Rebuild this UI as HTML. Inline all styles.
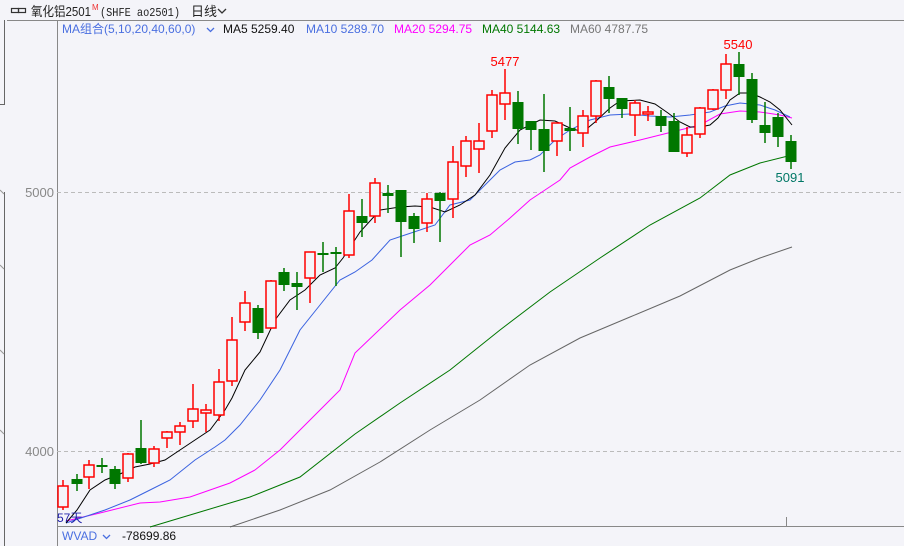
<!DOCTYPE html>
<html><head><meta charset="utf-8"><style>
body{margin:0;width:904px;height:546px;overflow:hidden;background:#f4f4f9;font-family:"Liberation Sans","Noto Sans CJK SC",sans-serif}
svg{position:absolute;left:0;top:0}
</style></head><body>
<svg width="904" height="546" viewBox="0 0 904 546" xmlns="http://www.w3.org/2000/svg" font-family="Liberation Sans, Noto Sans CJK SC, sans-serif">
<rect width="904" height="546" fill="#f4f4f9"/>
<g stroke="#333" fill="none" stroke-width="1.2"><rect x="11.5" y="8.5" width="7" height="4"/><rect x="18.5" y="8.5" width="7" height="4"/></g>
<text x="31" y="16" font-size="13" fill="#222" textLength="60" lengthAdjust="spacingAndGlyphs">氧化铝2501</text>
<text x="92" y="10" font-size="8" fill="#e33">M</text>
<text x="100" y="16" font-size="12" fill="#222" font-family="Liberation Mono, monospace" textLength="80" lengthAdjust="spacingAndGlyphs">(SHFE ao2501)</text>
<text x="191" y="16" font-size="13" fill="#222" textLength="26" lengthAdjust="spacingAndGlyphs">日线</text>
<path d="M218 9l4 4 4-4" stroke="#333" fill="none" stroke-width="1.3"/>
<line x1="7" y1="20.5" x2="904" y2="20.5" stroke="#888"/>
<path d="M0 104.5H4.5V20M4.5 546V192" stroke="#666" fill="none"/>
<path d="M0 190l4 4M0 265l4 4M0 350l4 4M0 430l4 4" stroke="#999"/>
<line x1="57.5" y1="20" x2="57.5" y2="546" stroke="#888"/>
<line x1="57" y1="526.5" x2="904" y2="526.5" stroke="#888"/>
<g stroke="#bbb" stroke-dasharray="4,3"><line x1="57" y1="192.5" x2="904" y2="192.5"/><line x1="57" y1="451.5" x2="904" y2="451.5"/></g>
<text x="54" y="197" font-size="13" fill="#888" text-anchor="end">5000</text>
<text x="54" y="456" font-size="13" fill="#888" text-anchor="end">4000</text>
<text x="62" y="33" font-size="12" fill="#4a6fe0">MA组合(5,10,20,40,60,0)</text>
<path d="M207 28l3.5 3.5 3.5-3.5" stroke="#4a6fe0" fill="none" stroke-width="1.3"/>
<text x="223" y="33" font-size="12" fill="#111">MA5 5259.40</text>
<text x="306" y="33" font-size="12" fill="#4a6fe0">MA10 5289.70</text>
<text x="394" y="33" font-size="12" fill="#f0f">MA20 5294.75</text>
<text x="482" y="33" font-size="12" fill="#070">MA40 5144.63</text>
<text x="570" y="33" font-size="12" fill="#777">MA60 4787.75</text>
<g fill="none" stroke-width="1">
<polyline stroke="#666" points="230,527 280,510 330,490 380,462 430,430 480,400 530,365 580,338 630,317 680,296 730,270 760,258 792,247"/>
<polyline stroke="#070" points="150,527 200,512 250,497 300,477 355,434 400,403 450,370 500,330 550,292 600,258 650,225 700,198 730,175 760,163 792,155"/>
<polyline stroke="#f0f" points="66,521 100,513 140,503 160,502 190,497 230,483 255,470 280,450 300,430 320,410 340,390 355,353 400,310 430,285 455,260 470,245 490,235 510,218 530,200 545,190 560,180 570,168 590,157 610,147 640,140 660,135 680,130 700,125 720,114 740,111 760,112 780,115 792,118"/>
<polyline stroke="#3a62e0" points="66,523 105,510 130,500 150,490 170,480 195,460 215,447 225,440 240,425 260,400 280,370 300,330 320,305 340,280 355,272 372,260 390,240 405,235 420,230 435,225 450,205 470,200 480,190 490,180 500,170 515,162 530,160 540,155 555,140 570,130 590,120 610,115 630,114 650,116 670,117 690,115 710,112 725,106 740,103 760,105 775,110 790,117"/>
<polyline stroke="#000" points="66,523 77,510 90,490 105,480 120,474 135,467 150,464 165,460 180,450 195,440 210,430 225,410 232,398 245,370 260,352 275,320 290,300 305,290 320,275 335,268 343,258 360,232 380,210 400,207 415,206 430,207 445,212 460,205 475,195 490,175 505,148 520,130 540,120 555,121 570,128 583,132 595,122 610,108 620,101 640,100 655,104 668,113 680,122 690,127 700,127 710,125 718,118 730,100 740,93 750,93 760,97 770,102 780,110 792,125"/>
</g>
<g id="c" stroke-width="1.5"></g>
<text x="505" y="66" font-size="13" fill="#f00" text-anchor="middle">5477</text>
<text x="738" y="49" font-size="13" fill="#f00" text-anchor="middle">5540</text>
<text x="790" y="182" font-size="13" fill="#076" text-anchor="middle">5091</text>
<text x="57" y="522" font-size="12" fill="#22a">57天</text>
<line x1="786.5" y1="517" x2="786.5" y2="526" stroke="#888"/>
<text x="62" y="540" font-size="12" fill="#4a6fe0">WVAD</text>
<path d="M103 535l3.5 3.5 3.5-3.5" stroke="#4a6fe0" fill="none" stroke-width="1.3"/>
<text x="122" y="540" font-size="12" fill="#111">-78699.86</text>
</svg>
<script>
var d=[[63,'r',486,507,480,510],[77,'g',479,484,474,491],[89,'r',465,477,460,489],[102,'g',465,467,458,473],[115,'g',469,484,466,489],[128,'r',454,478,453,482],[141,'g',448,463,420,464],[154,'r',449,463,446,467],[167,'r',432,438,431,448],[180,'r',426,432,422,445],[193,'r',409,421,384,428],[206,'r',410,413,404,432],[219,'r',382,415,369,421],[232,'r',340,381,317,386],[245,'r',303,322,291,331],[258,'g',308,333,305,339],[271,'r',281,328,280,329],[284,'g',272,285,268,291],[297,'g',283,287,272,310],[310,'r',252,278,252,303],[323,'g',253,255,242,272],[336,'g',252,254,247,286],[349,'r',211,255,194,258],[362,'g',216,223,199,237],[375,'r',183,216,178,223],[388,'g',193,196,185,213],[401,'g',190,222,190,257],[414,'g',216,229,213,243],[427,'r',199,223,193,232],[440,'g',193,201,192,242],[453,'r',162,199,146,218],[466,'r',141,166,136,177],[479,'r',141,149,123,173],[492,'r',95,131,90,138],[505,'r',93,104,69,120],[518,'g',102,129,91,144],[531,'g',121,130,121,150],[544,'g',129,151,94,172],[557,'r',123,141,123,156],[570,'g',128,131,107,151],[583,'r',116,133,110,147],[596,'r',81,116,80,123],[609,'g',87,99,76,113],[622,'g',98,109,98,118],[635,'r',103,115,100,136],[648,'r',112,113,106,121],[661,'g',116,126,110,132],[674,'g',121,152,113,152],[687,'r',135,153,127,157],[700,'r',108,134,107,138],[713,'r',90,109,89,110],[726,'r',64,90,54,99],[739,'g',64,77,52,95],[752,'g',79,120,73,123],[765,'g',125,133,102,143],[778,'g',117,137,113,147],[791,'g',141,162,135,169]];
var s='';d.forEach(function(c){var x=c[0],col=c[1]=='r'?'#f00':'#070';
s+='<line x1="'+x+'" y1="'+c[4]+'" x2="'+x+'" y2="'+c[5]+'" stroke="'+col+'"/>';
var h=Math.max(c[3]-c[2],2);
if(c[1]=='r')s+='<rect x="'+(x-5)+'" y="'+c[2]+'" width="10" height="'+h+'" fill="#f4f4f9" stroke="#f00"/>';
else s+='<rect x="'+(x-5.5)+'" y="'+c[2]+'" width="11" height="'+h+'" fill="#070" stroke="none"/>';});
document.getElementById('c').innerHTML=s;
</script>
</body></html>
